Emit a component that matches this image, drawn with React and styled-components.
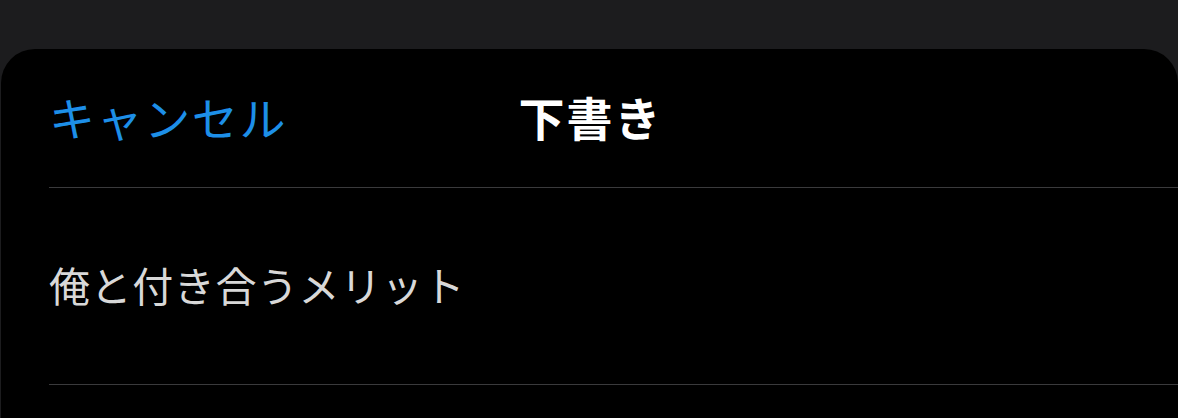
import React from 'react';
import styled, { createGlobalStyle } from 'styled-components';

const GlobalStyle = createGlobalStyle`
  html, body {
    margin: 0;
    padding: 0;
    background: #1c1c1e;
    font-family: "Noto Sans CJK JP", "Noto Sans", sans-serif;
  }
`;

const Page = styled.div`
  width: 1178px;
  height: 418px;
  overflow: hidden;
  padding-top: 49px;
  box-sizing: border-box;
`;

const Sheet = styled.div`
  background: #000;
  border-radius: 34px 34px 0 0;
  margin: 0 0 0 1px;
  height: 100%;
  padding-left: 48px;
`;

const Header = styled.div`
  position: relative;
  display: flex;
  align-items: center;
  height: 138px;
  border-bottom: 1px solid #3a3a3c;
`;

const CancelButton = styled.button`
  background: none;
  border: none;
  padding: 0;
  margin: -4px 0 0 0;
  font-family: inherit;
  font-size: 46px;
  letter-spacing: 1.6px;
  color: #1d8fe8;
  cursor: pointer;
  line-height: 1;
`;

const Title = styled.h1`
  position: absolute;
  left: 0;
  right: 0;
  margin: -4px 0 0 -46px;
  text-align: center;
  font-size: 46px;
  letter-spacing: 2px;
  font-weight: 700;
  color: #fff;
  pointer-events: none;
  line-height: 1;
`;

const Row = styled.div`
  display: flex;
  align-items: center;
  height: 197px;
  border-bottom: 1px solid #3a3a3c;
  font-size: 41px;
  letter-spacing: 0.6px;
  color: #d8d8d8;
  padding-bottom: 4px;
  box-sizing: border-box;
`;

const drafts = ['俺と付き合うメリット'];

const App = () => (
  <>
    <GlobalStyle />
    <Page>
      <Sheet>
        <Header>
          <CancelButton>キャンセル</CancelButton>
          <Title>下書き</Title>
        </Header>
        {drafts.map((d, i) => (
          <Row key={i}>{d}</Row>
        ))}
      </Sheet>
    </Page>
  </>
);

export default App;
